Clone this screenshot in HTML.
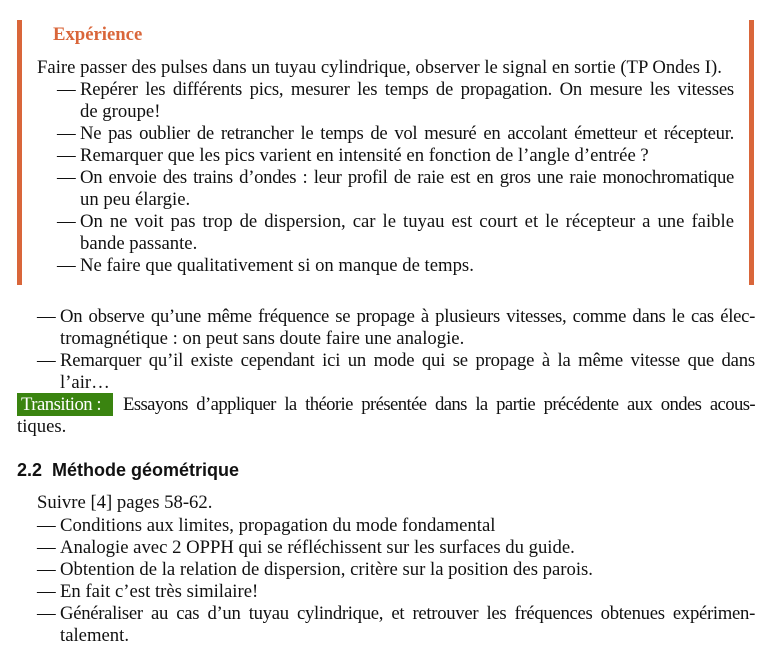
<!DOCTYPE html>
<html><head><meta charset="utf-8"><style>
body{margin:0;width:772px;height:650px;background:#fff;position:relative;font-family:"Liberation Serif",serif;font-size:18.7px;color:#111;overflow:hidden}
.l{position:absolute;white-space:nowrap;line-height:22px;height:22px}
.j{text-align:justify;text-align-last:justify;white-space:normal;overflow:hidden}
.d{position:absolute;line-height:22px}
.bar{position:absolute;background:#d9663a;width:5px;top:20px;height:265px}
</style></head><body>
<div class="bar" style="left:17px"></div>
<div class="bar" style="left:749px"></div>
<div class="l" style="left:53px;top:24px;color:#d9663a;font-weight:bold">Expérience</div>
<div class="l" style="left:37px;top:57px">Faire passer des pulses dans un tuyau cylindrique, observer le signal en sortie (TP Ondes I).</div>
<div class="d" style="left:57px;top:79px">—</div>
<div class="l j" style="left:80px;top:79px;width:654px;letter-spacing:-0.2px">Repérer les différents pics, mesurer les temps de propagation. On mesure les vitesses</div>
<div class="l" style="left:80px;top:101px">de groupe!</div>
<div class="d" style="left:57px;top:123px">—</div>
<div class="l j" style="left:80px;top:123px;width:654px;letter-spacing:-0.3px">Ne pas oublier de retrancher le temps de vol mesuré en accolant émetteur et récepteur.</div>
<div class="d" style="left:57px;top:145px">—</div>
<div class="l" style="left:80px;top:145px">Remarquer que les pics varient en intensité en fonction de l’angle d’entrée ?</div>
<div class="d" style="left:57px;top:167px">—</div>
<div class="l j" style="left:80px;top:167px;width:654px;letter-spacing:-0.3px">On envoie des trains d’ondes : leur profil de raie est en gros une raie monochromatique</div>
<div class="l" style="left:80px;top:189px">un peu élargie.</div>
<div class="d" style="left:57px;top:211px">—</div>
<div class="l j" style="left:80px;top:211px;width:654px">On ne voit pas trop de dispersion, car le tuyau est court et le récepteur a une faible</div>
<div class="l" style="left:80px;top:233px">bande passante.</div>
<div class="d" style="left:57px;top:255px">—</div>
<div class="l" style="left:80px;top:255px">Ne faire que qualitativement si on manque de temps.</div>

<div class="d" style="left:37px;top:306px">—</div>
<div class="l j" style="left:60px;top:306px;width:695px;letter-spacing:-0.3px">On observe qu’une même fréquence se propage à plusieurs vitesses, comme dans le cas élec-</div>
<div class="l" style="left:60px;top:328px">tromagnétique : on peut sans doute faire une analogie.</div>
<div class="d" style="left:37px;top:350px">—</div>
<div class="l j" style="left:60px;top:350px;width:695px;letter-spacing:-0.2px">Remarquer qu’il existe cependant ici un mode qui se propage à la même vitesse que dans</div>
<div class="l" style="left:60px;top:372px">l’air…</div>
<div style="position:absolute;left:17px;top:393px;width:96px;height:23px;background:#3a8410"></div>
<div class="l" style="left:21px;top:394px;color:#fff;letter-spacing:-0.5px">Transition :</div>
<div class="l j" style="left:123px;top:394px;width:632px;letter-spacing:-0.6px">Essayons d’appliquer la théorie présentée dans la partie précédente aux ondes acous-</div>
<div class="l" style="left:17px;top:416px">tiques.</div>

<div class="l" style="left:17px;top:459px;font-family:'Liberation Sans',sans-serif;font-weight:bold;font-size:18px">2.2&nbsp; Méthode géométrique</div>

<div class="l" style="left:37px;top:492px">Suivre [4] pages 58-62.</div>
<div class="d" style="left:37px;top:515px">—</div>
<div class="l" style="left:60px;top:515px">Conditions aux limites, propagation du mode fondamental</div>
<div class="d" style="left:37px;top:537px">—</div>
<div class="l" style="left:60px;top:537px">Analogie avec 2 OPPH qui se réfléchissent sur les surfaces du guide.</div>
<div class="d" style="left:37px;top:559px">—</div>
<div class="l" style="left:60px;top:559px">Obtention de la relation de dispersion, critère sur la position des parois.</div>
<div class="d" style="left:37px;top:581px">—</div>
<div class="l" style="left:60px;top:581px">En fait c’est très similaire!</div>
<div class="d" style="left:37px;top:603px">—</div>
<div class="l j" style="left:60px;top:603px;width:695px;letter-spacing:-0.3px">Généraliser au cas d’un tuyau cylindrique, et retrouver les fréquences obtenues expérimen-</div>
<div class="l" style="left:60px;top:625px">talement.</div>
</body></html>
